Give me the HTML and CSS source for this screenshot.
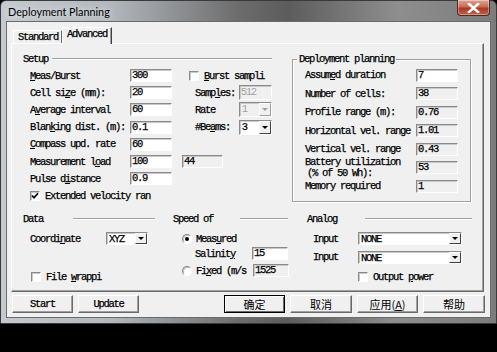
FILE: index.html
```html
<!DOCTYPE html>
<html>
<head>
<meta charset="utf-8">
<link rel="stylesheet" href="styles.css">
</head>
<body>
<div class="window">
  <div class="titlebar">
    <span class="title">Deployment Planning</span>
    <span class="close"><svg width="13" height="10" viewBox="0 0 13 10"><path d="M2 1 L11 9 M11 1 L2 9" stroke="#fff" stroke-width="2.6" stroke-linecap="square"/></svg></span>
  </div>
  <div class="client">
    <div class="tabs">
      <div class="tab">Standard</div>
      <div class="tab active">Advanced</div>
    </div>
    <div class="panel">
      <div class="top">
        <section class="setup">
          <div class="ghead"><span class="glabel">Setup</span><i class="etch grow"></i></div>
          <div class="sgrid">
            <div class="lbl"><u>M</u>eas/Burst</div><div class="edit">300</div>
            <div class="c3 burst"><span class="chk"></span><span class="ctext"><u>B</u>urst sampli</span></div>

            <div class="lbl">Cell si<u>z</u>e (mm):</div><div class="edit">20</div>
            <div class="c3 sub"><span class="sublbl">Samp<u>l</u>es:</span><div class="edit ro dis w35">512</div></div>

            <div class="lbl">A<u>v</u>erage interval</div><div class="edit">60</div>
            <div class="c3 sub"><span class="sublbl">Rate</span><div class="combo dis w35"><span class="cval">1</span><span class="arrow"><i class="tri"></i></span></div></div>

            <div class="lbl">Blan<u>k</u>ing dist. (m):</div><div class="edit">0.1</div>
            <div class="c3 sub"><span class="sublbl">#Be<u>a</u>ms:</span><div class="combo w35"><span class="cval">3</span><span class="arrow"><i class="tri"></i></span></div></div>

            <div class="lbl"><u>C</u>ompass upd. rate</div><div class="edit">60</div><div class="c3"></div>

            <div class="lbl">Measurement l<u>o</u>ad</div><div class="edit">100</div>
            <div class="c3"><div class="edit ro extra">44</div></div>

            <div class="lbl">Pulse d<u>i</u>stance</div><div class="edit">0.9</div><div class="c3"></div>

            <div class="span"><span class="chk on"><svg width="8" height="8" viewBox="0 0 8 8"><path d="M1 3.5 L3 5.8 L7 1.2" fill="none" stroke="#000" stroke-width="1.7"/></svg></span><span class="ctext">Extended velocity ran</span></div>
          </div>
        </section>
        <section class="deploy">
          <div class="legend">Deployment planning</div>
          <div class="dgrid">
            <div class="lbl">Assum<u>e</u>d duration</div><div class="edit">7</div>
            <div class="lbl">Number of cells:</div><div class="edit ro">38</div>
            <div class="lbl">Profile range (m):</div><div class="edit ro">0.76</div>
            <div class="lbl">Horizontal vel. range</div><div class="edit ro">1.01</div>
            <div class="lbl">Vertical vel. range</div><div class="edit ro">0.43</div>
            <div class="lbl two"><div>Battery utilization</div><div class="ind">(% of 50 Wh):</div></div><div class="edit ro">53</div>
            <div class="lbl">Memory required</div><div class="edit ro">1</div>
          </div>
        </section>
      </div>
      <div class="bottom">
        <section class="col data">
          <div class="bhead"><span class="bl">Data</span><i class="etch l82"></i></div>
          <div class="brow r1"><span class="lbl coord">Coordi<u>n</u>ate</span><div class="combo w42"><span class="cval">XYZ</span><span class="arrow"><i class="tri"></i></span></div></div>
          <div class="brow fw"><span class="chk"></span><span class="ctext">File <u>w</u>rappi</span></div>
        </section>
        <section class="col speed">
          <div class="bhead"><span class="bl sp">Speed of</span><i class="etch l48"></i></div>
          <div class="brow r1"><span class="radio on"></span><span class="ctext">Meas<u>u</u>red</span></div>
          <div class="brow"><span class="lbl sal">Salinit<u>y</u></span><div class="edit w36">15</div></div>
          <div class="brow fx"><span class="radio"></span><span class="ctext fxt">Fi<u>x</u>ed (m/s</span><div class="edit ro w36">1525</div></div>
        </section>
        <section class="col analog">
          <div class="bhead"><span class="bl an">Analog</span><i class="etch l107"></i></div>
          <div class="brow r1"><span class="lbl inp">Input</span><div class="combo w104"><span class="cval">NONE</span><span class="arrow"><i class="tri"></i></span></div></div>
          <div class="brow r2"><span class="lbl inp">Input</span><div class="combo w104"><span class="cval">NONE</span><span class="arrow"><i class="tri"></i></span></div></div>
          <div class="brow op"><span class="chk"></span><span class="ctext">Output <u>p</u>ower</span></div>
        </section>
      </div>
    </div>
    <div class="buttons">
      <div class="btn w61">Start</div>
      <div class="btn w61">Update</div>
      <div class="spacer"></div>
      <div class="btn cjk def w61">确定</div>
      <div class="btn cjk w62">取消</div>
      <div class="btn cjk w61">应用(<u>A</u>)</div>
      <div class="btn cjk w62">帮助</div>
    </div>
  </div>
</div>
</body>
</html>
```

FILE: styles.css
```css
* { box-sizing: border-box; }
body {
  margin: 0;
  width: 497px;
  height: 352px;
  overflow: hidden;
  background: #000;
  font-family: "Liberation Mono", "DejaVu Sans Mono", monospace;
  font-size: 10.5px;
  letter-spacing: -1.3px;
  font-weight: normal;
  color: #000;
  -webkit-text-stroke: 0.25px #000;
}
u { text-decoration: underline; text-underline-offset: 1px; text-decoration-thickness: 1px; }

.window {
  width: 497px;
  height: 324px;
  display: flex;
  flex-direction: column;
  border: 1px solid #3a3a3a;
  border-radius: 6px 6px 0 0;
  background: linear-gradient(to right, #c4cad0 0%, #b2b8be 22%, #6c6c6c 48%, #5c5c5c 58%, #8e8e8e 80%, #7c7c7c 100%);
}
.titlebar {
  height: 20px;
  display: flex;
  align-items: flex-start;
  justify-content: space-between;
  padding-left: 7px;
}
.title {
  font-family: Lato, "Noto Sans", sans-serif;
  font-weight: normal;
  letter-spacing: 0;
  font-size: 10.8px;
  line-height: 21px;
  color: #000;
  -webkit-text-stroke: 0;
  text-shadow: 0 0 6px rgba(255,255,255,0.9);
}
.close {
  margin: -1px 6px 0 0;
  width: 33px;
  height: 16px;
  border: 1px solid #4e2a22;
  border-top: none;
  border-radius: 0 0 4px 4px;
  background: linear-gradient(to bottom, #e0a595 0%, #c86a55 45%, #a83a24 55%, #c0604a 100%);
  display: flex;
  align-items: center;
  justify-content: center;
  box-shadow: inset 0 0 0 1px rgba(255,255,255,0.35);
}
.client {
  flex: 1;
  margin: 0 5px 5px 5px;
  border: 1px solid #6a6a6a;
  background: #f0f0f0;
  display: flex;
  flex-direction: column;
}

/* tabs */
.tabs {
  display: flex;
  align-items: flex-end;
  height: 22px;
  padding: 6px 0 0 6px;
  position: relative;
  z-index: 2;
  margin-bottom: -1px;
}
.tab {
  height: 13px;
  width: 49px;
  border-top: 1px solid #fff;
  border-left: 1px solid #fff;
  border-right: 1px solid #696969;
  line-height: 12px;
  padding-left: 4px;
  margin-bottom: 1px;
}
.tab.active {
  height: 17px;
  width: 50px;
  margin-bottom: 0;
  background: #f0f0f0;
  padding-left: 4px;
  line-height: 13px;
  border-right: 1px solid #404040;
  box-shadow: inset -1px 0 0 #a0a0a0;
}

.panel {
  margin-left: 4px;
  width: 473px;
  height: 249px;
  border-top: 1px solid #fff;
  border-left: 1px solid #fff;
  border-right: 1px solid #696969;
  border-bottom: 1px solid #696969;
  box-shadow: inset -1px -1px 0 #a0a0a0;
  padding: 9px 0 0 11px;
  display: flex;
  flex-direction: column;
}
.top { display: flex; gap: 20px; height: 152px; }
.setup { width: 249px; }
.ghead { height: 12px; display: flex; align-items: center; }
.glabel { line-height: 12px; margin-right: 4px; }
.etch { display: block; height: 2px; border-top: 1px solid #a0a0a0; border-bottom: 1px solid #fff; }
.grow { flex: 1; }

.sgrid {
  margin-top: 2px;
  padding-left: 7px;
  display: grid;
  grid-template-columns: 100px 42px 100px;
  grid-auto-rows: 17.2px;
  align-items: center;
}
.lbl { white-space: nowrap; line-height: 12px; }
.edit {
  height: 13px;
  width: 42px;
  background: #fff;
  border-top: 1px solid #8a8a8a;
  border-left: 1px solid #8a8a8a;
  border-right: 1px solid #fff;
  border-bottom: 1px solid #fff;
  box-shadow: inset 1px 1px 0 #c8c8c8;
  padding-left: 1px;
  line-height: 11px;
  overflow: hidden;
  white-space: nowrap;
}
.edit.ro { background: #f0f0f0; }
.dis { color: #a0a0a0; -webkit-text-stroke: 0; }
.w35 { width: 35px; height: 15px; line-height: 13px; }
.w36 { width: 36px; }
.c3 { display: flex; align-items: center; height: 100%; }
.burst { padding-left: 17px; }
.sub { padding-left: 23px; }
.sublbl { width: 46px; white-space: nowrap; line-height: 12px; }
.extra { margin-left: 10px; width: 41px; }
.span { grid-column: 1 / 4; display: flex; align-items: center; }
.ctext { margin-left: 5px; white-space: nowrap; line-height: 12px; }

.chk {
  width: 10px;
  height: 10px;
  flex: none;
  background: #fff;
  border-top: 1px solid #8a8a8a;
  border-left: 1px solid #8a8a8a;
  border-right: 1px solid #fff;
  border-bottom: 1px solid #fff;
  box-shadow: inset 1px 1px 0 #c8c8c8;
  display: flex;
  align-items: center;
  justify-content: center;
}
.radio {
  width: 10px;
  height: 10px;
  flex: none;
  border-radius: 50%;
  background: #fff;
  border: 1px solid;
  border-color: #8a8a8a #fff #fff #8a8a8a;
  box-shadow: inset 1px 1px 0 #c0c0c0;
  display: flex;
  align-items: center;
  justify-content: center;
}
.radio.on::after { content: ""; width: 4px; height: 4px; border-radius: 50%; background: #000; }

.combo {
  display: flex;
  height: 14px;
  background: #fff;
  border-top: 1px solid #8a8a8a;
  border-left: 1px solid #8a8a8a;
  border-right: 1px solid #fff;
  border-bottom: 1px solid #fff;
  box-shadow: inset 1px 1px 0 #c8c8c8;
}
.cval { flex: 1; padding-left: 2px; line-height: 12px; overflow: hidden; white-space: nowrap; }
.arrow {
  width: 12px;
  height: 100%;
  background: #f0f0f0;
  border-top: 1px solid #fff;
  border-left: 1px solid #fff;
  border-right: 1px solid #404040;
  border-bottom: 1px solid #404040;
  display: flex;
  align-items: center;
  justify-content: center;
}
.tri { width: 0; height: 0; border-left: 3px solid transparent; border-right: 3px solid transparent; border-top: 3px solid #000; }
.combo.dis { background: #f0f0f0; }
.combo.dis .tri { border-top-color: #a0a0a0; }
.combo.dis .arrow { border-right-color: #a0a0a0; border-bottom-color: #a0a0a0; }
.combo.w35 { width: 35px; height: 15px; }
.combo.w42 { width: 42px; height: 13px; }
.combo.w104 { width: 104px; height: 13px; }

.deploy {
  width: 179px;
  height: 143px;
  margin-top: 6px;
  border: 1px solid #a0a0a0;
  box-shadow: inset 1px 1px 0 #fff, 1px 1px 0 #fff;
}
.legend {
  width: max-content;
  height: 12px;
  margin: -7px 0 0 4px;
  padding: 0 2px;
  background: #f0f0f0;
  line-height: 12px;
}
.dgrid {
  margin-top: 1px;
  padding-left: 12px;
  display: grid;
  grid-template-columns: 111px 42px;
  grid-auto-rows: 18.5px;
  align-items: center;
}
.two { display: flex; flex-direction: column; line-height: 11px; }
.ind { padding-left: 2px; }

.bottom { display: flex; margin-top: 7.5px; }
.col { display: flex; flex-direction: column; }
.data { width: 150px; }
.speed { width: 134px; }
.analog { width: 165px; }
.bhead { height: 12px; display: flex; align-items: center; }
.bl { width: 50px; line-height: 12px; }
.bl.sp { width: 67px; }
.bl.an { width: 58px; }
.l82 { width: 82px; }
.l48 { width: 48px; }
.l107 { width: 107px; }
.brow { height: 15px; display: flex; align-items: center; }
.r1 { margin-top: 6.5px; }
.coord { width: 83px; padding-left: 7px; }
.fw { margin-top: 23px; padding-left: 8px; }
.speed .brow { padding-left: 9px; }
.speed .r1 .ctext, .fx .ctext { margin-left: 4px; }
.sal { width: 70px; padding-left: 13px; }
.fx { margin-top: 2px; }
.fxt { width: 57px; }
.inp { width: 51px; padding-left: 6px; }
.r2 { margin-top: 3.5px; }
.op { margin-top: 4.5px; padding-left: 51px; }

.buttons { display: flex; gap: 5px; margin: 3px 5px 0 5px; height: 18px; }
.spacer { flex: 1; }
.btn {
  height: 18px;
  background: #f0f0f0;
  border-top: 1px solid #fff;
  border-left: 1px solid #fff;
  border-right: 1px solid #696969;
  border-bottom: 1px solid #696969;
  box-shadow: inset -1px -1px 0 #a0a0a0;
  display: flex;
  align-items: center;
  justify-content: center;
  line-height: 14px;
}
.w61 { width: 61px; }
.w62 { width: 62px; }
.cjk {
  font-family: "Noto Sans CJK SC", sans-serif;
  font-weight: normal;
  letter-spacing: 0;
  font-size: 11px;
  -webkit-text-stroke: 0;
}
.btn.def { border: 1px solid #000; box-shadow: inset 1px 1px 0 #fff, inset -1px -1px 0 #696969; }
```
